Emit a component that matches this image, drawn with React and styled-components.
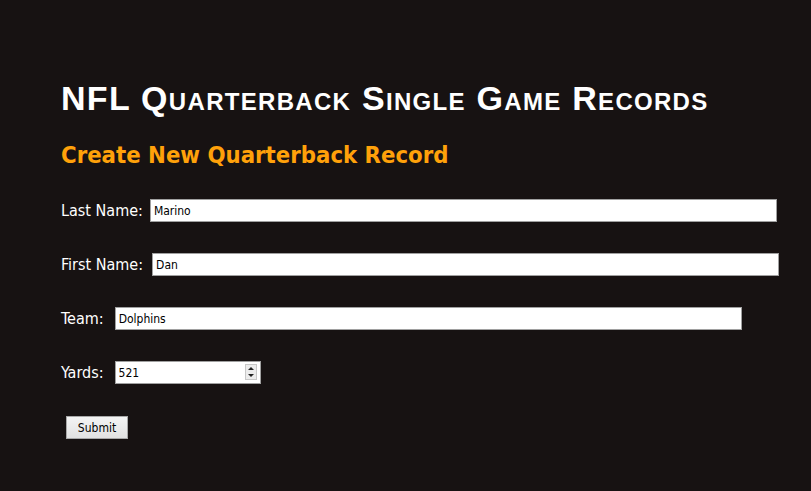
import React, { useState } from "react";
import styled, { createGlobalStyle } from "styled-components";

const GlobalStyle = createGlobalStyle`
  html, body {
    margin: 0;
    background: #171212;
  }
  body {
    font-family: "DejaVu Sans Condensed", "DejaVu Sans", sans-serif;
  }
`;

const Page = styled.div`
  min-height: 491px;
  padding: 78px 0 0 61px;
  box-sizing: border-box;
  background: #171212;
  color: #fff;
`;

const Title = styled.h1`
  margin: 0;
  font-family: "Liberation Sans", Arial, sans-serif;
  font-variant: small-caps;
  font-weight: bold;
  font-size: 34px;
  line-height: 40px;
  letter-spacing: 1.3px;
  color: #fff;
`;

const SubTitle = styled.h2`
  margin: 22px 0 0;
  font-family: "DejaVu Sans Condensed", "DejaVu Sans", sans-serif;
  font-weight: bold;
  font-size: 23.7px;
  line-height: 30px;
  color: #ffa10a;
`;

const Form = styled.form`
  display: flex;
  flex-direction: column;
  gap: 31px;
  margin-top: 29px;
`;

const Row = styled.div`
  display: flex;
  align-items: center;
  height: 23px;
`;

const Label = styled.label`
  font-size: 16px;
  color: #fff;
  margin-right: ${({ $gap }) => $gap || 10}px;
`;

const TextInput = styled.input`
  box-sizing: border-box;
  width: ${({ $w }) => $w || 627}px;
  height: 23px;
  padding: 1px 3px 0;
  border: 1px solid #a0a0a0;
  background: #fff;
  color: #000;
  font-family: "DejaVu Sans Condensed", "DejaVu Sans", sans-serif;
  font-size: 12px;
  outline: none;
`;

const Spin = styled.div`
  position: relative;
  display: flex;
`;

const SpinBtns = styled.div`
  position: absolute;
  right: 4px;
  top: 3px;
  display: flex;
  flex-direction: column;
  width: 12px;
  height: 16px;
  border: 1px solid #c8c8c8;
  background: #ececec;
  box-sizing: border-box;
  align-items: center;
  justify-content: space-around;
`;

const Arrow = styled.span`
  width: 0;
  height: 0;
  border-left: 3px solid transparent;
  border-right: 3px solid transparent;
  ${({ $down }) =>
    $down ? "border-top: 3px solid #222;" : "border-bottom: 3px solid #222;"}
`;

const SubmitButton = styled.button`
  margin: 1px 0 0 5px;
  width: 62px;
  height: 23px;
  padding: 0;
  border: 1px solid #a8a8a8;
  background: linear-gradient(#f4f4f4, #e2e2e2);
  color: #000;
  font-family: "DejaVu Sans Condensed", "DejaVu Sans", sans-serif;
  font-size: 12px;
  align-self: flex-start;
`;

export default function App() {
  const [form, setForm] = useState({
    last: "Marino",
    first: "Dan",
    team: "Dolphins",
    yards: "521",
  });
  const set = (k) => (e) => setForm({ ...form, [k]: e.target.value });

  return (
    <Page>
      <GlobalStyle />
      <Title>NFL Quarterback Single Game Records</Title>
      <SubTitle>Create New Quarterback Record</SubTitle>
      <Form onSubmit={(e) => e.preventDefault()}>
        <Row>
          <Label $gap={7}>Last Name:</Label>
          <TextInput value={form.last} onChange={set("last")} />
        </Row>
        <Row>
          <Label $gap={9}>First Name:</Label>
          <TextInput value={form.first} onChange={set("first")} />
        </Row>
        <Row>
          <Label $gap={11}>Team:</Label>
          <TextInput value={form.team} onChange={set("team")} />
        </Row>
        <Row>
          <Label $gap={11}>Yards:</Label>
          <Spin>
            <TextInput $w={146} value={form.yards} onChange={set("yards")} />
            <SpinBtns>
              <Arrow />
              <Arrow $down />
            </SpinBtns>
          </Spin>
        </Row>
        <SubmitButton type="submit">Submit</SubmitButton>
      </Form>
    </Page>
  );
}
